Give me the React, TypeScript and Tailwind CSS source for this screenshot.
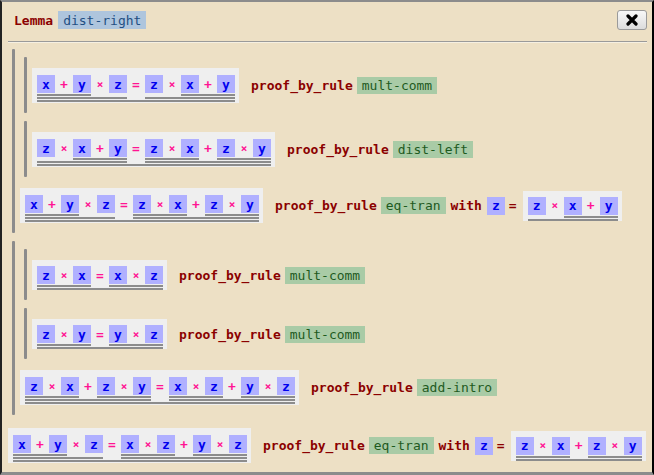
import React from "react";

type T = { v: string } | { op: string; l: T; r: T };
type P = { concl: T; rule: string; withT?: T; prem?: P[] };

const V = (v: string): T => ({ v });
const B = (op: string, l: T, r: T): T => ({ op, l, r });
const x = V("x"), y = V("y"), z = V("z");
const add = (a: T, b: T) => B("+", a, b);
const mul = (a: T, b: T) => B("×", a, b);
const eq = (a: T, b: T) => B("=", a, b);

const lhs = mul(add(x, y), z);
const zxy = mul(z, add(x, y));
const zxzy = add(mul(z, x), mul(z, y));
const xzyz = add(mul(x, z), mul(y, z));

const proof: P = {
  concl: eq(lhs, xzyz),
  rule: "eq-tran",
  withT: zxzy,
  prem: [
    {
      concl: eq(lhs, zxzy),
      rule: "eq-tran",
      withT: zxy,
      prem: [
        { concl: eq(lhs, zxy), rule: "mult-comm" },
        { concl: eq(zxy, zxzy), rule: "dist-left" },
      ],
    },
    {
      concl: eq(zxzy, xzyz),
      rule: "add-intro",
      prem: [
        { concl: eq(mul(z, x), mul(x, z)), rule: "mult-comm" },
        { concl: eq(mul(z, y), mul(y, z)), rule: "mult-comm" },
      ],
    },
  ],
};

const depth = (t: T): number => ("v" in t ? 0 : 1 + Math.max(depth(t.l), depth(t.r)));

function VarBox({ name }: { name: string }) {
  return (
    <div className="w-[18px] h-[18px] shrink-0 bg-[#b0b0ff] text-[#0000ee] font-bold flex items-center justify-center leading-none">
      {name}
    </div>
  );
}

function Term({ t }: { t: T }) {
  if ("v" in t) return <VarBox name={t.v} />;
  return (
    <div className="flex flex-col">
      <div className="flex items-start">
        <Term t={t.l} />
        <div
          className={
            t.op === "×"
              ? "w-[18px] h-[18px] shrink-0 flex items-center justify-center text-[#ff1493] font-bold leading-none text-[11px]"
              : "w-[18px] h-[18px] shrink-0 flex items-center justify-center text-[#ff1493] font-bold leading-none"
          }
        >
          {t.op}
        </div>
        <Term t={t.r} />
      </div>
      <div className="h-[2px] mt-[1px] bg-[#8c8c8c]" />
    </div>
  );
}

function ExprBox({ t }: { t: T }) {
  const deep = depth(t) >= 3;
  return (
    <div
      className={
        deep
          ? "bg-[#efefef] pt-[7px] pb-[1px] pl-[5px] pr-[4px] shrink-0"
          : "bg-[#efefef] pt-[6px] pb-0 pl-[5px] pr-[4px] shrink-0"
      }
    >
      <Term t={t} />
    </div>
  );
}

function Row({ p, top }: { p: P; top?: boolean }) {
  return (
    <div
      className={
        top
          ? "flex items-center pt-[9px] pb-[7px] whitespace-nowrap"
          : "flex items-center py-[7px] whitespace-nowrap"
      }
    >
      <ExprBox t={p.concl} />
      <span className="ml-[12px] font-bold text-[#8b0000]">proof_by_rule</span>
      <span className="ml-[4px] px-[5px] h-[17px] flex items-center bg-[#a9cba6] text-[#1e5a1e]">
        {p.rule}
      </span>
      {p.withT && (
        <>
          <span className="ml-[5px] font-bold text-[#8b0000]">with</span>
          <div className="ml-[5px]">
            <VarBox name="z" />
          </div>
          <span className="ml-[4px] font-bold text-[#8b0000]">=</span>
          <div className="ml-[6px]">
            <ExprBox t={p.withT} />
          </div>
        </>
      )}
    </div>
  );
}

function Proof({ p, top }: { p: P; top?: boolean }) {
  return (
    <div className="flex flex-col">
      {p.prem?.map((q, i) => (
        <div key={i} className="flex my-[4px]">
          <div className="ml-[4px] w-[3px] shrink-0 bg-[#8c8c8c] rounded-[1px]" />
          <div className="pl-[5px] pt-[4px] pb-[3px]">
            <Proof p={q} />
          </div>
        </div>
      ))}
      <Row p={p} top={top} />
    </div>
  );
}

export default function App() {
  return (
    <div className="w-[654px] h-[475px] box-border overflow-hidden bg-[#ede0c5] border-t-2 border-t-[#8c8c8c] border-l-2 border-l-[#222] border-r-2 border-r-black border-b-[3px] border-b-[#8c8c8c] pt-[8px] pl-[6px] pr-[5px] font-['DejaVu_Sans_Mono',monospace] text-[13px] leading-[17px]">
      <div className="flex items-center justify-between h-[20px] pl-[6px]">
        <div className="flex items-center">
          <span className="font-bold text-[#8b0000]">Lemma</span>
          <span className="ml-[5px] px-[5px] h-[18px] flex items-center bg-[#aec5dd] text-[#1f4f82]">
            dist-right
          </span>
        </div>
        <button className="w-[30px] h-[20px] rounded-[3px] border border-[#9a9a9a] bg-gradient-to-b from-[#f8f8f8] to-[#dcdcdc] flex items-center justify-center">
          <svg width="12" height="12" viewBox="0 0 12 12">
            <path d="M2 2 L10 10 M10 2 L2 10" stroke="#000" strokeWidth="3.2" strokeLinecap="round" />
          </svg>
        </button>
      </div>
      <div className="mt-[11px] border-t border-t-[#9a9a9a] border-b border-b-[#f6f0e2]" />
      <div className="pt-[2px]">
        <Proof p={proof} top />
      </div>
    </div>
  );
}
